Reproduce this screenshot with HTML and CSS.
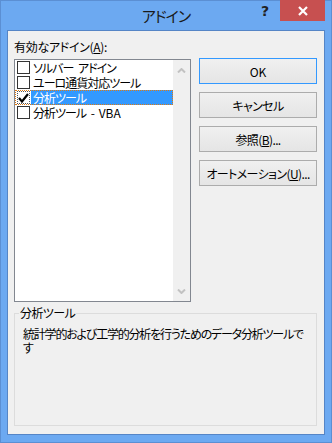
FILE: index.html
```html
<!DOCTYPE html>
<html lang="ja">
<head>
    <meta charset="UTF-8">
    <title>アドイン</title>
    <link rel="stylesheet" href="styles.css">
</head>
<body>
    <div class="window">
        <!-- Title Bar -->
        <div class="titlebar">
            <div class="title">アドイン</div>
            <div class="controls">
                <span class="help">?</span>
                <span class="close">
                    <svg width="10" height="10" viewBox="0 0 10 10">
                        <path d="M1 1 L9 9 M9 1 L1 9" stroke="#fff" stroke-width="2.2" fill="none"/>
                    </svg>
                </span>
            </div>
        </div>

        <!-- Dialog Body -->
        <div class="client">
            <div class="main">
                <div class="left">
                    <div class="label">有効なアドイン(<u>A</u>):</div>
                    <div class="listbox">
                        <ul class="items">
                            <li class="item"><span class="check"></span><span class="name">ソルバー アドイン</span></li>
                            <li class="item"><span class="check"></span><span class="name">ユーロ通貨対応ツール</span></li>
                            <li class="item selected">
                                <span class="check checked">
                                    <svg width="11" height="10" viewBox="0 0 11 10">
                                        <path d="M1 5 L4 8.5 L10 1" stroke="#000" stroke-width="2.2" fill="none"/>
                                    </svg>
                                </span>
                                <span class="name">分析ツール</span>
                            </li>
                            <li class="item"><span class="check"></span><span class="name">分析ツール - <span class="latin">VBA</span></span></li>
                        </ul>
                        <div class="scrollbar">
                            <svg width="9" height="5" viewBox="0 0 9 5">
                                <path d="M1 4.5 L4.5 1 L8 4.5" stroke="#c2c2c2" stroke-width="2" fill="none"/>
                            </svg>
                            <svg width="9" height="5" viewBox="0 0 9 5">
                                <path d="M1 0.5 L4.5 4 L8 0.5" stroke="#c2c2c2" stroke-width="2" fill="none"/>
                            </svg>
                        </div>
                    </div>
                </div>

                <div class="buttons">
                    <button class="btn default">OK</button>
                    <button class="btn">キャンセル</button>
                    <button class="btn">参照(<u>B</u>)...</button>
                    <button class="btn">オートメーション(<u>U</u>)...</button>
                </div>
            </div>

            <!-- Description Group -->
            <fieldset class="desc">
                <legend>分析ツール</legend>
                <p>統計学的および工学的分析を行うためのデータ分析ツールです</p>
            </fieldset>
        </div>
    </div>
</body>
</html>
```

FILE: styles.css
```css
/* General */
body {
    margin: 0;
    font-family: "Noto Sans CJK JP", sans-serif;
    font-size: 12px;
    color: #000;
}

/* Window Frame */
.window {
    width: 332px;
    height: 443px;
    box-sizing: border-box;
    border: 1px solid #5b8fd3;
    background: #6ca9f1;
    display: flex;
    flex-direction: column;
}

/* Title Bar */
.titlebar {
    height: 29px;
    padding: 0 6px;
    display: grid;
    grid-template-columns: 1fr auto 1fr;
    align-items: center;
}
.title {
    grid-column: 2;
    font-size: 15px;
    font-feature-settings: "palt";
    letter-spacing: -1px;
    color: #1a1a1a;
}
.controls {
    grid-column: 3;
    justify-self: end;
    align-self: start;
    display: flex;
    align-items: center;
    margin-top: -1px;
}
.help {
    font-family: "DejaVu Sans", sans-serif;
    font-size: 14px;
    font-weight: bold;
    color: #222;
    margin-right: 11px;
}
.close {
    width: 45px;
    height: 21px;
    background: #c75050;
    display: flex;
    justify-content: center;
    align-items: center;
}

/* Client Area */
.client {
    flex: 1;
    margin: 0 6px 7px;
    border: 1px solid #5585c6;
    background: #f0f0f0;
    padding: 8px 7px 8px 6px;
    display: flex;
    flex-direction: column;
}
.main {
    display: flex;
    gap: 8px;
}
.left {
    width: 177px;
}
.label {
    line-height: 16px;
    font-feature-settings: "palt";
    letter-spacing: -0.3px;
}

/* List Box */
.listbox {
    margin-top: 4px;
    height: 243px;
    box-sizing: border-box;
    border: 1px solid #828790;
    background: #fff;
    display: flex;
}
.items {
    list-style: none;
    margin: 0;
    padding: 0;
    flex: 1;
}
.item {
    height: 15px;
    display: flex;
    align-items: center;
}
.check {
    width: 13px;
    height: 13px;
    box-sizing: border-box;
    border: 1px solid #333;
    background: #fff;
    margin: 0 1px 0 2px;
    display: flex;
    justify-content: center;
    align-items: center;
}
.check.checked {
    border-style: dotted;
    border-color: #555;
}
.name {
    flex: 1;
    height: 15px;
    line-height: 15px;
    padding-left: 2px;
    font-feature-settings: "palt";
    letter-spacing: -1px;
    word-spacing: 3px;
    white-space: pre;
}
.latin {
    letter-spacing: 0;
}
.item.selected {
    outline: 1px dotted #e07a10;
    outline-offset: -1px;
}
.item.selected .name {
    background: #3399ff;
    color: #fff;
}
.scrollbar {
    width: 17px;
    background: #f0f0f0;
    display: flex;
    flex-direction: column;
    justify-content: space-between;
    align-items: center;
    padding: 8px 0 7px;
}

/* Buttons */
.buttons {
    width: 118px;
    margin-top: 19px;
    display: flex;
    flex-direction: column;
    gap: 8px;
}
.btn {
    height: 26px;
    box-sizing: border-box;
    border: 1px solid #acacac;
    background: linear-gradient(#f0f0f0, #e5e5e5);
    font-family: "Noto Sans CJK JP", sans-serif;
    font-size: 12px;
    font-feature-settings: "palt";
    letter-spacing: -0.6px;
    color: #000;
    padding: 0;
}
.btn.default {
    border-color: #3399ff;
    letter-spacing: 0;
}

/* Description Group */
.desc {
    flex: 1;
    margin: 3px 0 0;
    border: 1px solid #dcdcdc;
    padding: 0 6px 8px 4px;
}
.desc legend {
    padding: 0 1px;
    line-height: 16px;
    font-feature-settings: "palt";
    letter-spacing: -0.6px;
}
.desc p {
    margin: 6px 0 0 4px;
    line-height: 14px;
    font-feature-settings: "palt";
    letter-spacing: -1.2px;
}
```
